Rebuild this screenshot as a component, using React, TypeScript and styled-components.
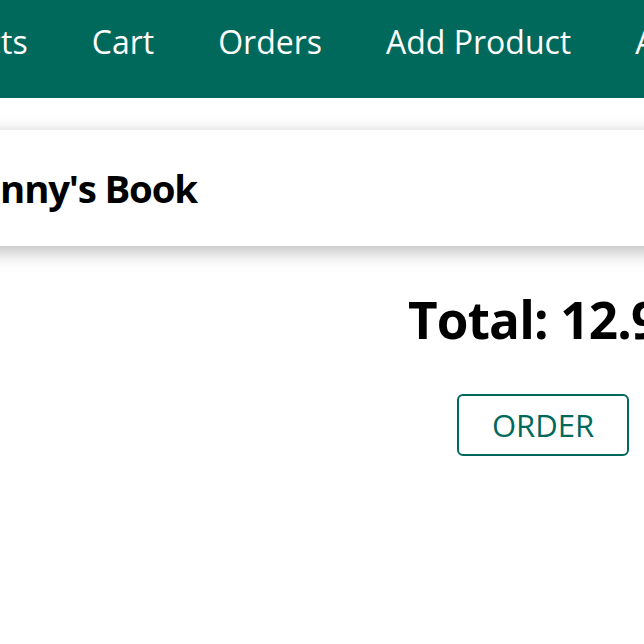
import React from "react";
import styled, { createGlobalStyle } from "styled-components";

const GlobalStyle = createGlobalStyle`
  html, body {
    margin: 0;
    padding: 0;
    overflow: hidden;
    background: #ffffff;
    font-family: "Open Sans", "Noto Sans", sans-serif;
  }
`;

const Nav = styled.nav`
  background: #00695c;
  height: 98px;
  display: flex;
  overflow: hidden;
`;

const NavList = styled.ul`
  display: flex;
  list-style: none;
  margin: 0 0 0 -137px;
  padding: 20px 0 0;
`;

const NavLink = styled.li`
  padding: 0 32px;
  color: #ffffff;
  font-size: 32px;
  line-height: 1.362;
  white-space: nowrap;
`;

const Main = styled.main`
  padding-top: 32px;
`;

const Card = styled.section`
  background: #ffffff;
  margin: 0 -40px 0 -90px;
  padding: 32px;
  box-shadow: 0 5px 18px rgba(0, 0, 0, 0.28);
`;

const Title = styled.h2`
  margin: 0;
  font-size: 38.4px;
  line-height: 1.362;
  font-weight: 700;
  letter-spacing: -1.2px;
  color: #000000;
  white-space: nowrap;
`;

const Summary = styled.div`
  display: flex;
  justify-content: flex-end;
  padding-right: 15px;
  margin-top: 39px;
`;

const SummaryColumn = styled.div`
  display: flex;
  flex-direction: column;
  align-items: center;
  gap: 39px;
  width: 172px;
`;

const Total = styled.h1`
  margin: 0 0 0 10px;
  font-size: 51.2px;
  line-height: 1.362;
  font-weight: 700;
  letter-spacing: -0.8px;
  color: #000000;
  white-space: nowrap;
`;

const OrderButton = styled.button`
  box-sizing: border-box;
  width: 172px;
  height: 62px;
  border: 2px solid #00695c;
  border-radius: 6px;
  background: #ffffff;
  color: #00695c;
  font-family: "Open Sans", sans-serif;
  font-size: 31px;
  padding: 0;
  cursor: pointer;
`;

export default function App() {
  const links = ["Products", "Cart", "Orders", "Add Product", "Admin"];
  return (
    <>
      <GlobalStyle />
      <Nav>
        <NavList>
          {links.map((l) => (
            <NavLink key={l}>{l}</NavLink>
          ))}
        </NavList>
      </Nav>
      <Main>
        <Card>
          <Title>Johnny's Book</Title>
        </Card>
        <Summary>
          <SummaryColumn>
            <Total>Total: 12.99</Total>
            <OrderButton>ORDER</OrderButton>
          </SummaryColumn>
        </Summary>
      </Main>
    </>
  );
}
